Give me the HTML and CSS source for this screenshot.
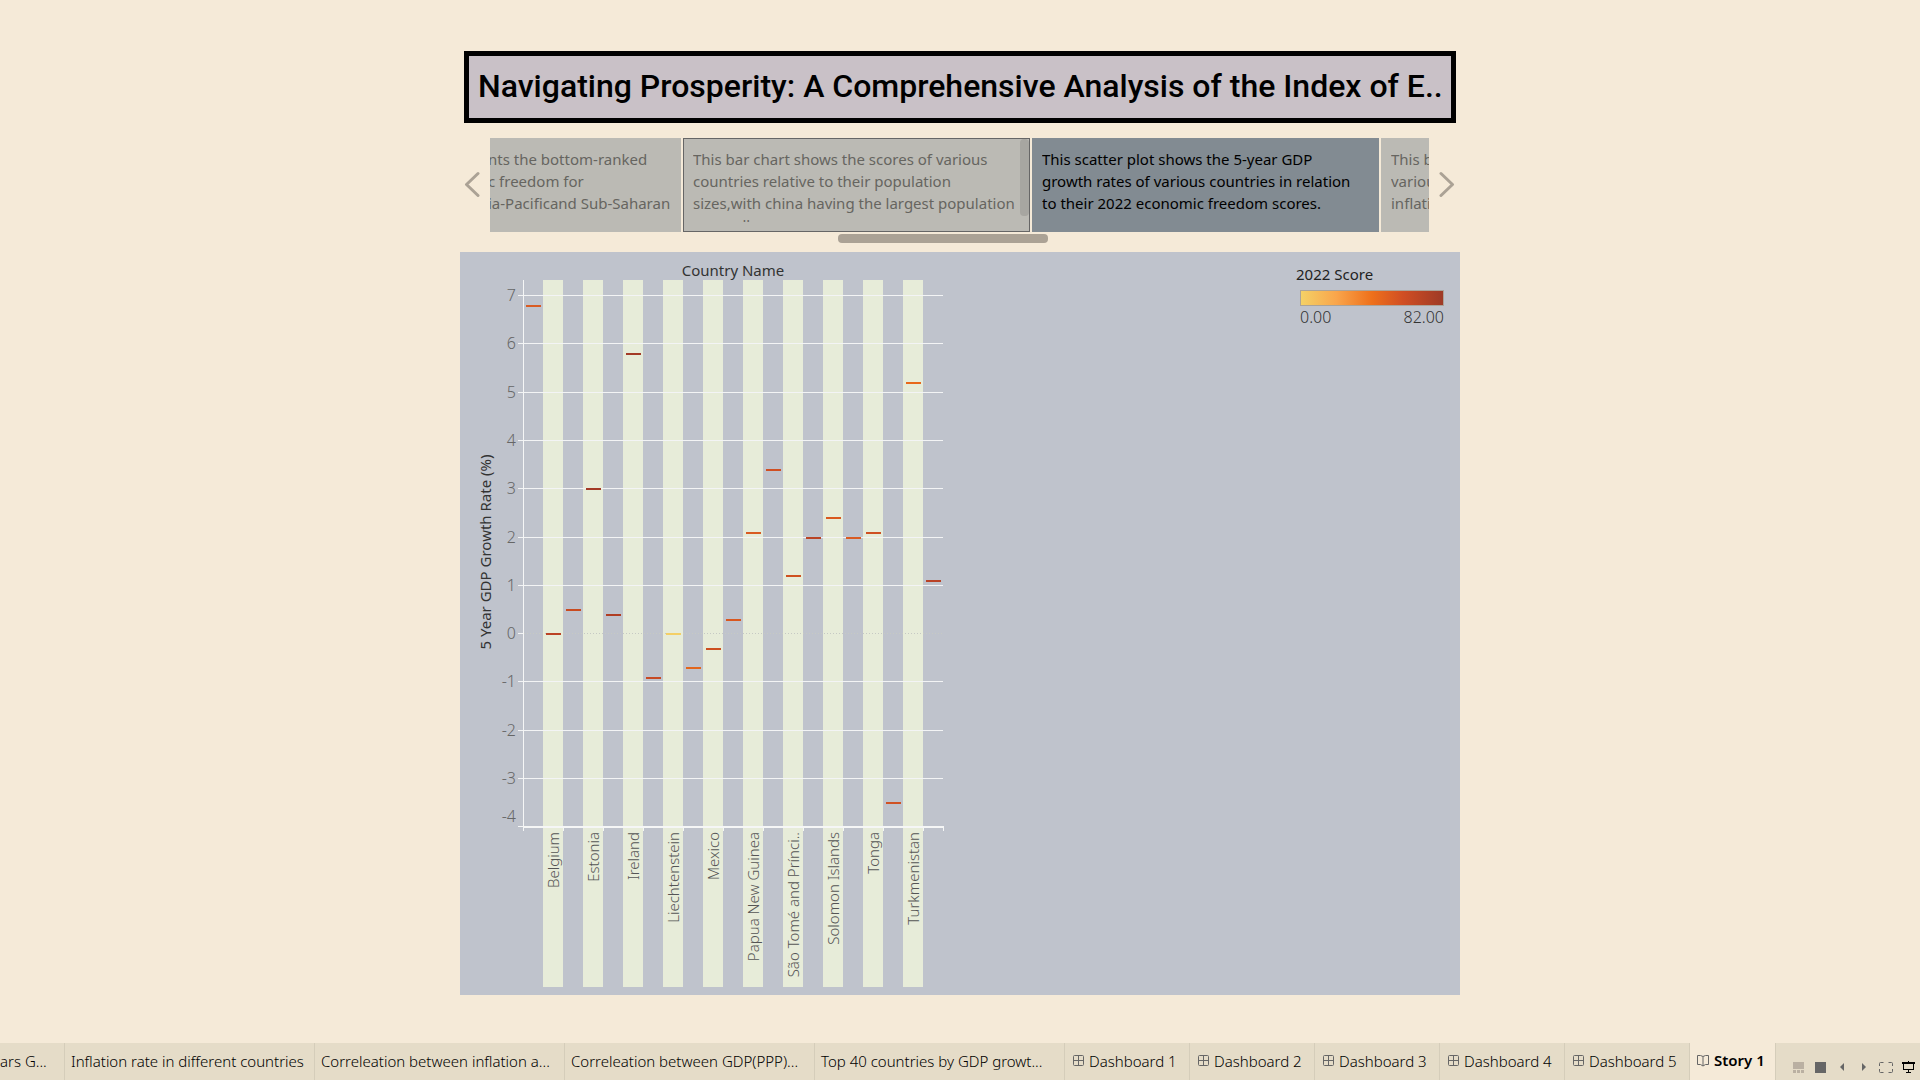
FILE: index.html
```html
<!DOCTYPE html>
<html lang="en">
<head>
<meta charset="utf-8">
<meta name="viewport" content="width=device-width, initial-scale=1">
<title>Navigating Prosperity</title>
<link rel="stylesheet" href="styles.css">
</head>
<body>
<main class="story">
  <h1 class="story-title">Navigating Prosperity: A Comprehensive Analysis of the Index of E..</h1>

  <section class="captions" aria-label="Story points">
    <button class="arrow" type="button" aria-label="Previous point"><svg width="16" height="26" viewBox="0 0 16 26"><path d="M14 2.500 2.500 13.500 14 24.500"/></svg></button>
    <div class="strip">
      <button class="point point-first" type="button"><span class="point-text">nts the bottom-ranked<br>c freedom for<br>ia-Pacificand Sub-Saharan</span></button>
      <button class="point point-hover" type="button"><span class="point-text">This bar chart shows the scores of various<br>countries relative to their population<br>sizes,with china having the largest population<br>as an all</span><span class="point-thumb"></span></button>
      <button class="point point-active" type="button" aria-current="true"><span class="point-text">This scatter plot shows the 5-year GDP<br>growth rates of various countries in relation<br>to their 2022 economic freedom scores.</span></button>
      <button class="point" type="button"><span class="point-text">This bar<br>various<br>inflation</span></button>
    </div>
    <button class="arrow arrow-next" type="button" aria-label="Next point"><svg width="16" height="26" viewBox="0 0 16 26"><path d="M2 2.500 13.500 13.500 2 24.500"/></svg></button>
  </section>
  <div class="strip-scroll"><span class="strip-thumb"></span></div>

  <section class="sheet">
    <svg class="plot" width="500" height="743" viewBox="0 0 500 743" role="img" aria-label="5 Year GDP Growth Rate by Country Name">
      <path class="bands" d="M83 28h20v707h-20zM123 28h20v707h-20zM163 28h20v707h-20zM203 28h20v707h-20zM243 28h20v707h-20zM283 28h20v707h-20zM323 28h20v707h-20zM363 28h20v707h-20zM403 28h20v707h-20zM443 28h20v707h-20z"/>
      <path class="grid" d="M58 43.500H483M58 91.500H483M58 140.500H483M58 188.500H483M58 236.500H483M58 285.500H483M58 333.500H483M58 478.500H483M58 381.500H63M58 429.500H483M58 526.500H483"/>
      <path class="zero" d="M64 381.500H483"/>
      <path class="axis" d="M63.500 28V579M58 574.500H63M103.500 576V579M143.500 576V579M183.500 576V579M223.500 576V579M263.500 576V579M303.500 576V579M343.500 576V579M383.500 576V579M423.500 576V579M463.500 576V579M483.500 574V579"/>
      <path class="baseline" d="M63 575H483"/>
      <g class="marks">
        <rect x="66" y="53" fill="#d95b22"/>
        <rect x="86" y="381" fill="#bb4225"/>
        <rect x="106" y="357" fill="#c94b20"/>
        <rect x="126" y="236" fill="#a33a26"/>
        <rect x="146" y="362" fill="#b03d22"/>
        <rect x="166" y="101" fill="#a33a26"/>
        <rect x="186" y="425" fill="#c74a24"/>
        <rect x="206" y="381" fill="#f4cf66"/>
        <rect x="226" y="415" fill="#e2661c"/>
        <rect x="246" y="396" fill="#cc4f20"/>
        <rect x="266" y="367" fill="#d9571f"/>
        <rect x="286" y="280" fill="#d95b22"/>
        <rect x="306" y="217" fill="#d04f22"/>
        <rect x="326" y="323" fill="#cf5120"/>
        <rect x="346" y="285" fill="#b94425"/>
        <rect x="366" y="265" fill="#d9591f"/>
        <rect x="386" y="285" fill="#d95b22"/>
        <rect x="406" y="280" fill="#cf5023"/>
        <rect x="426" y="550" fill="#d05224"/>
        <rect x="446" y="130" fill="#e8681b"/>
        <rect x="466" y="328" fill="#b94226"/>
      </g>
      <g class="ticks">
        <text x="56" y="49">7</text>
        <text x="56" y="97">6</text>
        <text x="56" y="146">5</text>
        <text x="56" y="194">4</text>
        <text x="56" y="242">3</text>
        <text x="56" y="291">2</text>
        <text x="56" y="339">1</text>
        <text x="56" y="387">0</text>
        <text x="56" y="435">-1</text>
        <text x="56" y="484">-2</text>
        <text x="56" y="532">-3</text>
        <text x="56" y="570">-4</text>
      </g>
      <text class="field" x="273" y="24">Country Name</text>
      <text class="field" transform="translate(31 300) rotate(-90)">5 Year GDP Growth Rate (%)</text>
      <g class="names">
        <text transform="translate(99 580) rotate(-90)">Belgium</text>
        <text transform="translate(139 580) rotate(-90)">Estonia</text>
        <text transform="translate(179 580) rotate(-90)">Ireland</text>
        <text transform="translate(219 580) rotate(-90)">Liechtenstein</text>
        <text transform="translate(259 580) rotate(-90)">Mexico</text>
        <text transform="translate(299 580) rotate(-90)">Papua New Guinea</text>
        <text transform="translate(339 580) rotate(-90)">São Tomé and Prínci..</text>
        <text transform="translate(379 580) rotate(-90)">Solomon Islands</text>
        <text transform="translate(419 580) rotate(-90)">Tonga</text>
        <text transform="translate(459 580) rotate(-90)">Turkmenistan</text>
      </g>
    </svg>
    <aside class="legend">
      <h2 class="legend-title">2022 Score</h2>
      <div class="legend-bar"></div>
      <div class="legend-range"><span>0.00</span><span>82.00</span></div>
    </aside>
  </section>
</main>

<svg class="defs" width="0" height="0" aria-hidden="true">
  <symbol id="dash" viewBox="0 0 11 11"><path d="M1.500.500h8q1 0 1 1v8q0 1-1 1h-8q-1 0-1-1v-8q0-1 1-1zM5.500 1v9M1 5.500h9"/></symbol>
</svg>

<footer class="bar">
  <nav class="tabs" aria-label="Sheets">
    <a class="tab tab-cut" href="#">ars G...</a>
    <a class="tab tab-wide" href="#">Inflation rate in different countries</a>
    <a class="tab tab-wide" href="#">Correleation between inflation a...</a>
    <a class="tab tab-wide" href="#">Correleation between GDP(PPP)...</a>
    <a class="tab tab-wide" href="#">Top 40 countries by GDP growt...</a>
    <a class="tab" href="#"><svg class="tab-icon" width="11" height="11"><use href="#dash"/></svg>Dashboard 1</a>
    <a class="tab" href="#"><svg class="tab-icon" width="11" height="11"><use href="#dash"/></svg>Dashboard 2</a>
    <a class="tab" href="#"><svg class="tab-icon" width="11" height="11"><use href="#dash"/></svg>Dashboard 3</a>
    <a class="tab" href="#"><svg class="tab-icon" width="11" height="11"><use href="#dash"/></svg>Dashboard 4</a>
    <a class="tab" href="#"><svg class="tab-icon" width="11" height="11"><use href="#dash"/></svg>Dashboard 5</a>
    <a class="tab tab-current" href="#" aria-current="page"><svg class="tab-icon" width="12" height="13" viewBox="0 0 12 13"><path d="M6 2.500 3.500 1.500H.500v9h3L6 12l2.500-1.500h3v-9h-3zM6 2.500V12"/></svg>Story 1</a>
  </nav>
  <div class="tools">
    <button class="tool" type="button" aria-label="Show filmstrip"><svg width="11" height="11"><path fill="#bab0a2" d="M0 0h11v7H0zM0 8h3v3H0zM4 8h3v3H4zM8 8h3v3H8z"/></svg></button>
    <button class="tool" type="button" aria-label="Show tabs"><svg width="11" height="11"><path fill="#666" d="M0 0h11v11H0z"/></svg></button>
    <button class="tool" type="button" aria-label="Previous sheet"><svg width="4" height="8"><path fill="#666" d="M4 0v8L0 4z"/></svg></button>
    <button class="tool" type="button" aria-label="Next sheet"><svg width="4" height="8"><path fill="#666" d="M0 0v8l4-4z"/></svg></button>
    <button class="tool" type="button" aria-label="Full screen"><svg width="14" height="11"><path fill="none" stroke="#666" d="M4.500.500h-3q-1 0-1 1V4M9.500.500h3q1 0 1 1V4M.500 7v2.500q0 1 1 1h3M13.500 7v2.500q0 1-1 1h-3"/></svg></button>
    <button class="tool" type="button" aria-label="Presentation mode"><svg width="13" height="12"><path d="M6 0h1v1h6v2h-1v6H7v2h2v1H4v-1h2V9H1V3H0V1h6zM2 3v5h9V3z" fill-rule="evenodd"/></svg></button>
  </div>
</footer>
</body>
</html>
```
FILE: styles.css
```css
* { box-sizing: border-box; }
body {
  margin: 0;
  min-height: 100vh;
  display: flex;
  flex-direction: column;
  background: #f5ead8;
  font-family: "Noto Sans", "Open Sans", sans-serif;
  font-size: 15px;
}
button { border: 0; padding: 0; background: none; font: inherit; color: inherit; }

.story {
  flex: 1;
  width: 100%;
  max-width: 1000px;
  margin: 0 auto;
  padding-top: 51px;
}
.story-title {
  margin: 0 4px 15px;
  padding: 0 9px 2px;
  border: 5px solid #000;
  background: #c9c1c7;
  font: 500 32px/60px Roboto, sans-serif;
  white-space: nowrap;
  overflow: hidden;
}

.captions { display: flex; align-items: center; height: 94px; }
.arrow { flex: none; width: 30px; height: 94px; padding: 0 0 2px 4px; text-align: left; }
.arrow svg { display: block; }
.arrow-next { width: 31px; padding-left: 10px; }
.arrow path { fill: none; stroke: #aba295; stroke-width: 3; stroke-linecap: round; stroke-linejoin: round; }
.strip { flex: 1; min-width: 0; display: flex; gap: 2px; overflow: hidden; }
.point {
  position: relative;
  flex: none;
  width: 347px;
  height: 94px;
  padding: 10px;
  background: #bbbab4;
  color: #666560;
  line-height: 22px;
  text-align: left;
}
.point-first { width: 191px; padding-left: 0; }
.point-first .point-text { margin-left: -2px; }
.point-hover { border: 1px solid #666; padding: 9px; }
.point-active { background: #828b92; color: #000; }
.point-text { display: block; height: 74px; overflow: hidden; white-space: nowrap; }
.point-thumb {
  position: absolute;
  top: 0;
  right: 0;
  width: 9px;
  height: 77px;
  border-radius: 4px;
  background: #a7a6a1;
}
.strip-scroll { display: flex; padding: 2px 0 9px 378px; }
.strip-thumb { width: 210px; height: 9px; border-radius: 4px; background: #aba295; }

.sheet {
  display: flex;
  justify-content: space-between;
  align-items: flex-start;
  background: #bfc3cc;
}
.plot { display: block; flex: none; }
.bands { fill: #e7ecd9; }
.grid { stroke: #f3f4f5; }
.zero { stroke: #c6c9c4; stroke-dasharray: 1 2; }
.axis { stroke: #f5f6f6; fill: none; }
.baseline { stroke: #f5f6f6; stroke-width: 2; }
.marks rect { width: 15px; height: 2px; }
.ticks { font-size: 16px; font-weight: 300; fill: #666; text-anchor: end; }
.names { font-weight: 300; fill: #555; text-anchor: end; }
.field { fill: #333; text-anchor: middle; }

.legend { width: 164px; padding: 10px 16px 0 0; }
.legend-title { margin: 0; font-size: 15px; font-weight: 400; line-height: 24px; color: #222; }
.legend-bar {
  height: 16px;
  margin: 4px 0 0 4px;
  border: 1px solid #aaa399;
  background: linear-gradient(90deg, #f4d166, #f9a54b 25%, #ee701b 50%, #d04e23 72%, #9e3a26);
}
.legend-range {
  display: flex;
  justify-content: space-between;
  margin-left: 4px;
  font-size: 16px;
  font-weight: 300;
  line-height: 22px;
  color: #333;
}

.defs { position: absolute; }
.bar { display: flex; justify-content: space-between; height: 37px; background: #e5dcc8; }
.tabs { display: flex; min-width: 0; overflow: hidden; }
.tab {
  flex: none;
  display: flex;
  align-items: center;
  width: 125px;
  padding: 0 0 1px 7px;
  border-right: 1px solid #d5cdba;
  color: #000;
  font-weight: 300;
  text-decoration: none;
  white-space: nowrap;
}
.tab-wide { width: 250px; padding-left: 6px; }
.tab-cut { width: 65px; padding-left: 0; }
.tab-current { width: 86px; background: #f5ead8; font-weight: 600; padding-bottom: 3px; }
.tab-icon { flex: none; margin: 0 5px 2px 1px; fill: none; stroke: #666; }
.tab-current .tab-icon { margin-bottom: 0; margin-left: 0; }
.tools { display: flex; flex: none; padding: 13px 1px 0 0; }
.tool { display: flex; align-items: center; justify-content: center; width: 22px; height: 22px; }
```
